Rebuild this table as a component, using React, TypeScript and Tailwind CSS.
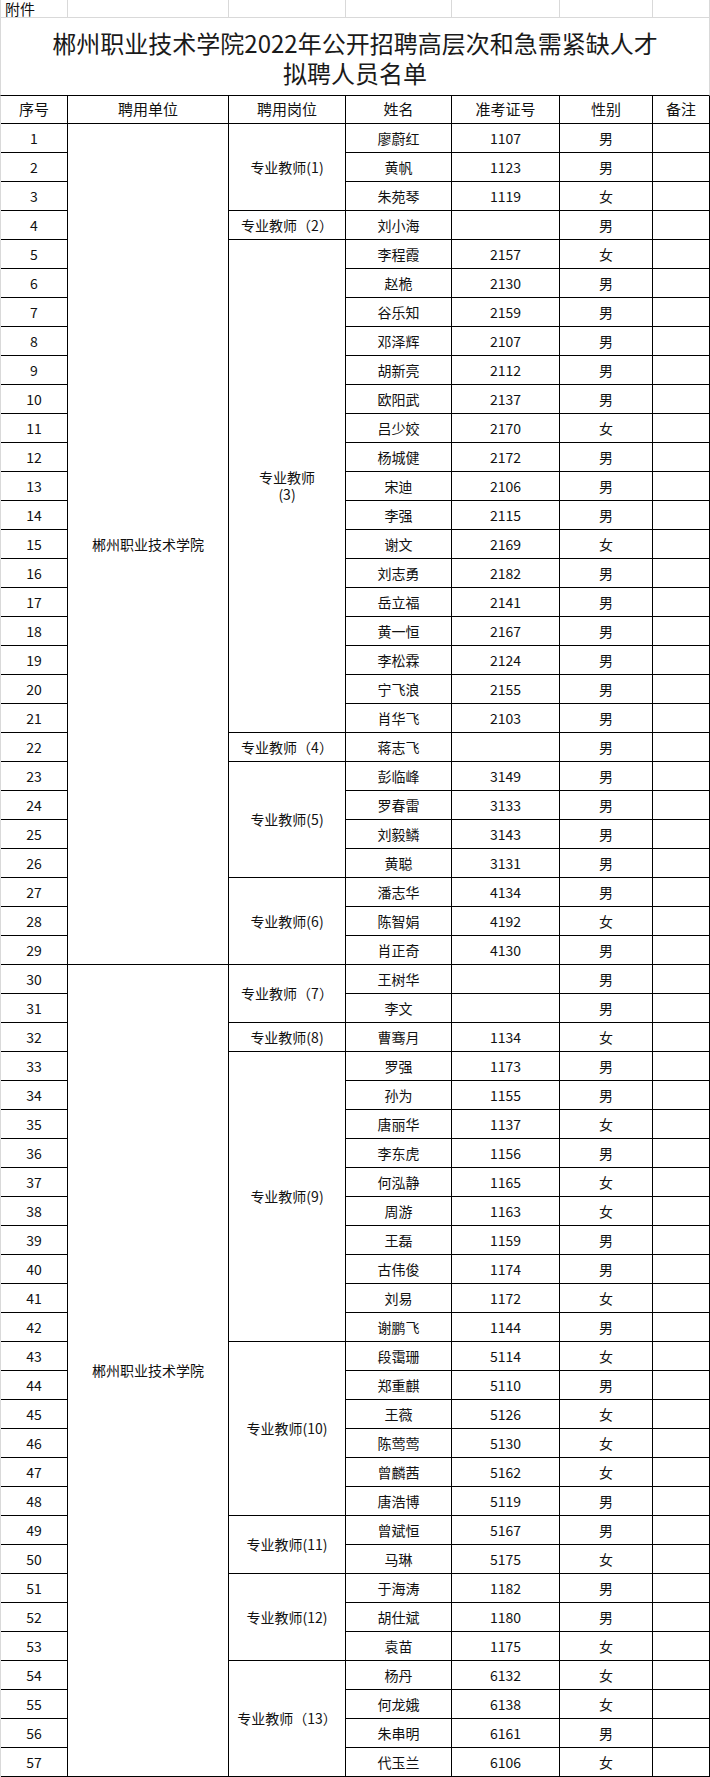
import React from "react";

type Row = { name: string; no: string; sex: string };

const rows: Row[] = [
  { name: "廖蔚红", no: "1107", sex: "男" },
  { name: "黄帆", no: "1123", sex: "男" },
  { name: "朱苑琴", no: "1119", sex: "女" },
  { name: "刘小海", no: "", sex: "男" },
  { name: "李程霞", no: "2157", sex: "女" },
  { name: "赵桅", no: "2130", sex: "男" },
  { name: "谷乐知", no: "2159", sex: "男" },
  { name: "邓泽辉", no: "2107", sex: "男" },
  { name: "胡新亮", no: "2112", sex: "男" },
  { name: "欧阳武", no: "2137", sex: "男" },
  { name: "吕少姣", no: "2170", sex: "女" },
  { name: "杨城健", no: "2172", sex: "男" },
  { name: "宋迪", no: "2106", sex: "男" },
  { name: "李强", no: "2115", sex: "男" },
  { name: "谢文", no: "2169", sex: "女" },
  { name: "刘志勇", no: "2182", sex: "男" },
  { name: "岳立福", no: "2141", sex: "男" },
  { name: "黄一恒", no: "2167", sex: "男" },
  { name: "李松霖", no: "2124", sex: "男" },
  { name: "宁飞浪", no: "2155", sex: "男" },
  { name: "肖华飞", no: "2103", sex: "男" },
  { name: "蒋志飞", no: "", sex: "男" },
  { name: "彭临峰", no: "3149", sex: "男" },
  { name: "罗春雷", no: "3133", sex: "男" },
  { name: "刘毅鳞", no: "3143", sex: "男" },
  { name: "黄聪", no: "3131", sex: "男" },
  { name: "潘志华", no: "4134", sex: "男" },
  { name: "陈智娟", no: "4192", sex: "女" },
  { name: "肖正奇", no: "4130", sex: "男" },
  { name: "王树华", no: "", sex: "男" },
  { name: "李文", no: "", sex: "男" },
  { name: "曹骞月", no: "1134", sex: "女" },
  { name: "罗强", no: "1173", sex: "男" },
  { name: "孙为", no: "1155", sex: "男" },
  { name: "唐丽华", no: "1137", sex: "女" },
  { name: "李东虎", no: "1156", sex: "男" },
  { name: "何泓静", no: "1165", sex: "女" },
  { name: "周游", no: "1163", sex: "女" },
  { name: "王磊", no: "1159", sex: "男" },
  { name: "古伟俊", no: "1174", sex: "男" },
  { name: "刘易", no: "1172", sex: "女" },
  { name: "谢鹏飞", no: "1144", sex: "男" },
  { name: "段霭珊", no: "5114", sex: "女" },
  { name: "郑重麒", no: "5110", sex: "男" },
  { name: "王薇", no: "5126", sex: "女" },
  { name: "陈莺莺", no: "5130", sex: "女" },
  { name: "曾麟茜", no: "5162", sex: "女" },
  { name: "唐浩博", no: "5119", sex: "男" },
  { name: "曾斌恒", no: "5167", sex: "男" },
  { name: "马琳", no: "5175", sex: "女" },
  { name: "于海涛", no: "1182", sex: "男" },
  { name: "胡仕斌", no: "1180", sex: "男" },
  { name: "袁苗", no: "1175", sex: "女" },
  { name: "杨丹", no: "6132", sex: "女" },
  { name: "何龙娥", no: "6138", sex: "女" },
  { name: "朱串明", no: "6161", sex: "男" },
  { name: "代玉兰", no: "6106", sex: "女" },
];

// merged post cells: first row (1-based), span, label
const posts: { start: number; span: number; label: React.ReactNode }[] = [
  { start: 1, span: 3, label: "专业教师(1)" },
  { start: 4, span: 1, label: "专业教师（2）" },
  {
    start: 5,
    span: 17,
    label: (
      <span className="leading-[17px]">
        专业教师
        <br />
        (3)
      </span>
    ),
  },
  { start: 22, span: 1, label: "专业教师（4）" },
  { start: 23, span: 4, label: "专业教师(5)" },
  { start: 27, span: 3, label: "专业教师(6)" },
  { start: 30, span: 2, label: "专业教师（7）" },
  { start: 32, span: 1, label: "专业教师(8)" },
  { start: 33, span: 10, label: "专业教师(9)" },
  { start: 43, span: 6, label: "专业教师(10)" },
  { start: 49, span: 2, label: "专业教师(11)" },
  { start: 51, span: 3, label: "专业教师(12)" },
  { start: 54, span: 4, label: "专业教师（13）" },
];

const spanClass: Record<number, string> = {
  1: "row-span-1",
  2: "row-span-2",
  3: "row-span-3",
  4: "row-span-4",
  6: "row-span-6",
  10: "row-span-10",
  17: "row-span-17",
  28: "row-span-28",
  29: "row-span-29",
};

const cell = "flex items-center justify-center border-r border-b border-black text-center";
const cols = "grid-cols-[67px_161px_117px_106px_108px_93px_57px]";

export default function App() {
  const body: React.ReactNode[] = [];
  rows.forEach((r, i) => {
    const n = i + 1;
    body.push(
      <div key={`i${n}`} className={cell}>
        {n}
      </div>
    );
    if (n === 1 || n === 30) {
      body.push(
        <div key={`u${n}`} className={`${cell} ${spanClass[n === 1 ? 29 : 28]}`}>
          郴州职业技术学院
        </div>
      );
    }
    const p = posts.find((x) => x.start === n);
    if (p) {
      body.push(
        <div key={`p${n}`} className={`${cell} ${spanClass[p.span]}`}>
          {p.label}
        </div>
      );
    }
    body.push(
      <div key={`n${n}`} className={cell}>
        {r.name}
      </div>,
      <div key={`c${n}`} className={cell}>
        {r.no}
      </div>,
      <div key={`s${n}`} className={cell}>
        {r.sex}
      </div>,
      <div key={`b${n}`} className={cell}></div>
    );
  });

  return (
    <div
      className="w-[710px] bg-white text-[#111] text-[14px]"
      style={{ fontFamily: '"Noto Sans CJK SC", "Noto Sans", sans-serif' }}
    >
      {/* top sheet row */}
      <div className={`grid ${cols} h-[18px] border-b border-l border-[#d9d9d9]`}>
        <div className="border-r border-[#d9d9d9] pl-1 leading-[18px] text-[15px]">附件</div>
        <div className="border-r border-[#d9d9d9]"></div>
        <div className="border-r border-[#d9d9d9]"></div>
        <div className="border-r border-[#d9d9d9]"></div>
        <div className="border-r border-[#d9d9d9]"></div>
        <div className="border-r border-[#d9d9d9]"></div>
        <div className="border-r border-[#d9d9d9]"></div>
      </div>

      {/* title */}
      <div className="w-[710px] h-[77px] border-l border-r border-[#d9d9d9] flex flex-col items-center pt-[10px] text-[24px] leading-[30px] font-normal text-[#1a1a1a]">
        <div>郴州职业技术学院2022年公开招聘高层次和急需紧缺人才</div>
        <div>拟聘人员名单</div>
      </div>

      {/* table */}
      <div className={`grid ${cols} grid-rows-[28px] auto-rows-[29px] border-t border-l border-black border-l-[#d9d9d9] w-[710px] border-r border-r-[#d9d9d9]`}>
        <div className={`${cell} text-[15px]`}>序号</div>
        <div className={`${cell} text-[15px]`}>聘用单位</div>
        <div className={`${cell} text-[15px]`}>聘用岗位</div>
        <div className={`${cell} text-[15px]`}>姓名</div>
        <div className={`${cell} text-[15px]`}>准考证号</div>
        <div className={`${cell} text-[15px]`}>性别</div>
        <div className={`${cell} text-[15px]`}>备注</div>
        {body}
      </div>
    </div>
  );
}
